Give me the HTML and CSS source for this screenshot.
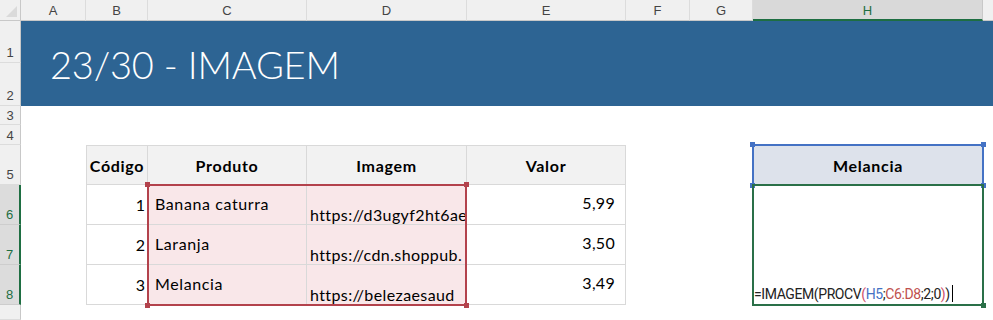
FILE: index.html
```html
<!DOCTYPE html>
<html lang="pt">
<head>
<meta charset="utf-8">
<title>23/30 - IMAGEM</title>
<link rel="stylesheet" href="styles.css">
</head>
<body>
<div class="sheet">
  <div class="corner"><span class="corner-tri"></span></div>
  <div class="colhead">A</div>
  <div class="colhead">B</div>
  <div class="colhead">C</div>
  <div class="colhead">D</div>
  <div class="colhead">E</div>
  <div class="colhead">F</div>
  <div class="colhead">G</div>
  <div class="colhead colhead-sel">H</div>
  <div class="colhead colhead-last"></div>

  <div class="rowhead r1">1</div>
  <div class="rowhead r2">2</div>
  <div class="rowhead r3">3</div>
  <div class="rowhead r4">4</div>
  <div class="rowhead r5">5</div>
  <div class="rowhead r6 rowhead-sel">6</div>
  <div class="rowhead r7 rowhead-sel">7</div>
  <div class="rowhead r8 rowhead-sel">8</div>
  <div class="rowhead r9"></div>

  <div class="banner"><h1 class="title">23/30 - IMAGEM</h1></div>

  <div class="th cb r5 first">Código</div>
  <div class="th cc r5">Produto</div>
  <div class="th cd r5">Imagem</div>
  <div class="th ce r5">Valor</div>

  <div class="td num cb r6 first">1</div>
  <div class="td prod cc r6">Banana caturra</div>
  <div class="td url cd r6">https://d3ugyf2ht6ae</div>
  <div class="td val ce r6">5,99</div>

  <div class="td num cb r7 first">2</div>
  <div class="td prod cc r7">Laranja</div>
  <div class="td url cd r7">https://cdn.shoppub.</div>
  <div class="td val ce r7">3,50</div>

  <div class="td num cb r8 first">3</div>
  <div class="td prod cc r8">Melancia</div>
  <div class="td url cd r8">https://belezaesaud</div>
  <div class="td val ce r8">3,49</div>

  <div class="range range-red">
    <span class="handle tl"></span><span class="handle tr"></span>
    <span class="handle bl"></span><span class="handle br"></span>
  </div>

  <div class="lookup">Melancia</div>
  <div class="range range-blue">
    <span class="handle tl"></span><span class="handle tr"></span>
    <span class="handle bl"></span><span class="handle br"></span>
  </div>

  <div class="edit">
    <span class="formula">=IMAGEM(PROCV<span class="paren">(</span><span class="ref-blue">H5</span>;<span class="ref-red">C6:D8</span>;2;0<span class="paren">)</span>)</span><span class="caret"></span>
    <span class="handle br"></span>
  </div>
</div>
</body>
</html>
```
FILE: styles.css
```css
* { box-sizing: border-box; }
html, body { margin: 0; padding: 0; background: #fff; }
.sheet {
  width: 993px;
  height: 320px;
  overflow: hidden;
  display: grid;
  grid-template-columns: 21px 65px 62px 159px 160px 159px 64px 63px 230px 1fr;
  grid-template-rows: 21px 42px 43px 19px 20px 40px 40px 40px 40px 1fr;
  font-family: "Lato", "Noto Sans", sans-serif;
  color: #000;
}
.corner {
  grid-column: 1; grid-row: 1;
  background: #f0f0f0;
  border-right: 1px solid #c8c8c8;
  border-bottom: 1px solid #c8c8c8;
  position: relative;
}
.corner-tri {
  position: absolute; right: 3px; bottom: 3px;
  width: 0; height: 0;
  border-left: 11px solid transparent;
  border-bottom: 11px solid #dadada;
}
.colhead {
  grid-row: 1;
  background: #f0f0f0;
  border-right: 1px solid #dcdcdc;
  border-bottom: 1px solid #c8c8c8;
  display: flex; align-items: center; justify-content: center;
  font-family: "Liberation Sans", "Noto Sans", sans-serif;
  font-size: 13px;
  color: #444;
  padding-top: 1px;
}
.colhead-sel {
  background: #d9d9d9;
  color: #1e6e42;
  border-bottom: 2px solid #1e6e42;
  border-right: 1px solid #c8c8c8;
}
.colhead-last { border-right: none; }
.rowhead {
  grid-column: 1;
  background: #f0f0f0;
  border-right: 1px solid #c8c8c8;
  border-bottom: 1px solid #dcdcdc;
  display: flex; align-items: flex-end; justify-content: center;
  font-family: "Liberation Sans", "Noto Sans", sans-serif;
  font-size: 13px;
  color: #444;
  padding-bottom: 2px;
}
.rowhead-sel {
  background: #dcdcdc;
  color: #1e6e42;
  border-right: 2px solid #1e6e42;
  border-bottom-color: #cdcdcd;
}
.r1 { grid-row: 2; } .r2 { grid-row: 3; } .r3 { grid-row: 4; } .r4 { grid-row: 5; }
.r5 { grid-row: 6; } .r6 { grid-row: 7; } .r7 { grid-row: 8; } .r8 { grid-row: 9; } .r9 { grid-row: 10; }
.rowhead.r3, .rowhead.r4 { padding-bottom: 1px; }

.banner {
  grid-column: 2 / -1; grid-row: 2 / 4;
  background: #2d6493;
  display: flex; align-items: center;
  padding-left: 29px;
}
.title {
  margin: 0;
  font-family: "Lato", sans-serif;
  font-weight: 300;
  font-size: 38px;
  color: #fff;
  letter-spacing: -0.2px;
}

.cb { grid-column: 3; } .cc { grid-column: 4; } .cd { grid-column: 5; } .ce { grid-column: 6; }
.th, .td {
  border-right: 1px solid #d9d9d9;
  border-bottom: 1px solid #d9d9d9;
  font-size: 16px;
  letter-spacing: 0.6px;
  overflow: hidden;
  white-space: nowrap;
}
.first { border-left: 1px solid #d9d9d9; }
.th {
  background: #f2f2f2;
  border-top: 1px solid #d9d9d9;
  font-weight: 700;
  letter-spacing: 0.7px;
  display: flex; align-items: center; justify-content: center;
}
.td { display: flex; }
.num { justify-content: flex-end; align-items: center; padding: 0 2px 0 0; letter-spacing: 0; }
.prod { background: #f9e7e9; align-items: center; padding: 0 0 2px 7px; }
.url { background: #f9e7e9; align-items: flex-end; padding: 0 0 0 3px; letter-spacing: 0.4px; }
.val { justify-content: flex-end; align-items: center; padding: 0 10px 4px 0; letter-spacing: 0.3px; }

.range { position: relative; z-index: 2; pointer-events: none; }
.range-red {
  grid-column: 4 / 6; grid-row: 7 / 10;
  margin: -1px 0 -1px -1px;
  border: 2px solid #b3424c;
}
.range-red .handle { background: #b3424c; }
.lookup {
  grid-column: 9; grid-row: 6;
  background: #dde2eb;
  font-weight: 700; font-size: 16px;
  letter-spacing: 0.7px;
  display: flex; align-items: center; justify-content: center;
}
.range-blue {
  grid-column: 9; grid-row: 6;
  margin: -1px -1px -1px -1px;
  border: 2px solid #4472c4;
}
.range-blue .handle { background: #4472c4; }
.handle {
  position: absolute;
  width: 5px; height: 5px;
}
.handle.tl { left: -4px; top: -4px; }
.handle.tr { right: -4px; top: -4px; }
.handle.bl { left: -4px; bottom: -4px; }
.handle.br { right: -4px; bottom: -4px; }

.edit {
  grid-column: 9; grid-row: 7 / 10;
  margin: -1px -1px -1px -1px;
  border: 2px solid #2a7048;
  position: relative; z-index: 3;
  display: flex; align-items: flex-end;
  padding: 0 0 1px 0;
  font-family: "Roboto", "Liberation Sans", sans-serif;
  font-size: 14px;
  color: #222;
  white-space: nowrap;
}
.edit .handle { background: #2a7048; }
.formula { letter-spacing: -0.4px; line-height: 18px; }
.paren { color: #d0506a; }
.ref-blue { color: #4472c4; }
.ref-red { color: #c0504d; }
.caret {
  display: inline-block;
  width: 1px; height: 17px;
  background: #000;
  margin-left: 2px;
  margin-bottom: 1px;
}
```
